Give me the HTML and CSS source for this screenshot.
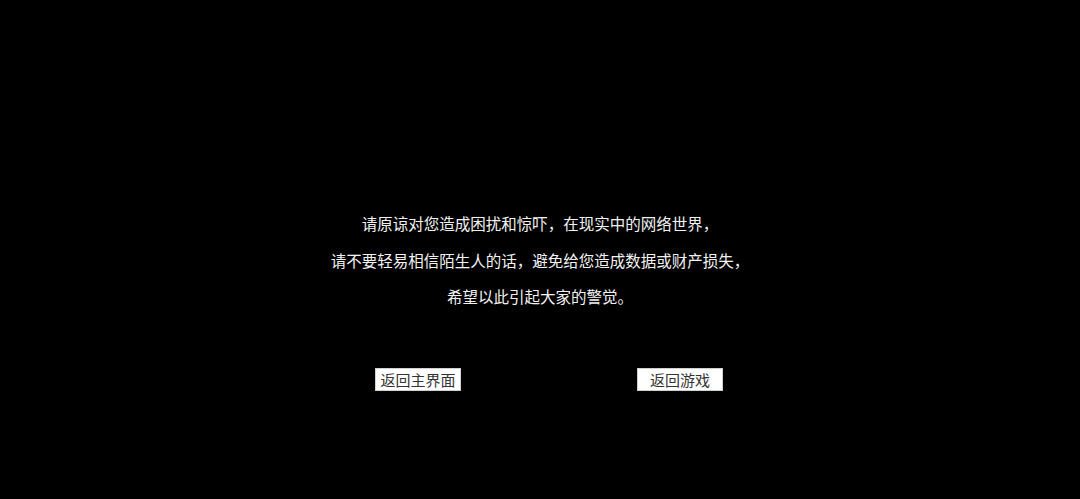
FILE: index.html
```html
<!DOCTYPE html>
<html lang="zh">
<head>
<meta charset="utf-8">
<link rel="stylesheet" href="styles.css">
</head>
<body>
<div class="page">
  <div class="message">
    <p>请原谅对您造成困扰和惊吓，在现实中的网络世界，</p>
    <p>请不要轻易相信陌生人的话，避免给您造成数据或财产损失，</p>
    <p>希望以此引起大家的警觉。</p>
  </div>
  <div class="actions">
    <button class="btn">返回主界面</button>
    <button class="btn">返回游戏</button>
  </div>
</div>
</body>
</html>
```

FILE: styles.css
```css
html, body {
  margin: 0;
  padding: 0;
  background: #000;
}
.page {
  width: 1080px;
  height: 499px;
  background: #000;
  display: flex;
  flex-direction: column;
  padding-top: 205px;
  box-sizing: border-box;
  font-family: "Noto Sans CJK SC", "Noto Sans", sans-serif;
}
.message {
  text-align: center;
  color: #f2f2f2;
  font-size: 15.5px;
  line-height: 36.5px;
}
.message p {
  margin: 0;
}
.actions {
  display: flex;
  gap: 176px;
  padding-left: 375px;
  margin-top: 53px;
}
.btn {
  width: 86px;
  height: 23px;
  padding: 0;
  margin: 0;
  border: 1px solid #d0d0d0;
  background: #fff;
  color: #333;
  font-family: "Noto Sans CJK SC", "Noto Sans", sans-serif;
  font-size: 15px;
  line-height: 21px;
  box-sizing: border-box;
}
```
